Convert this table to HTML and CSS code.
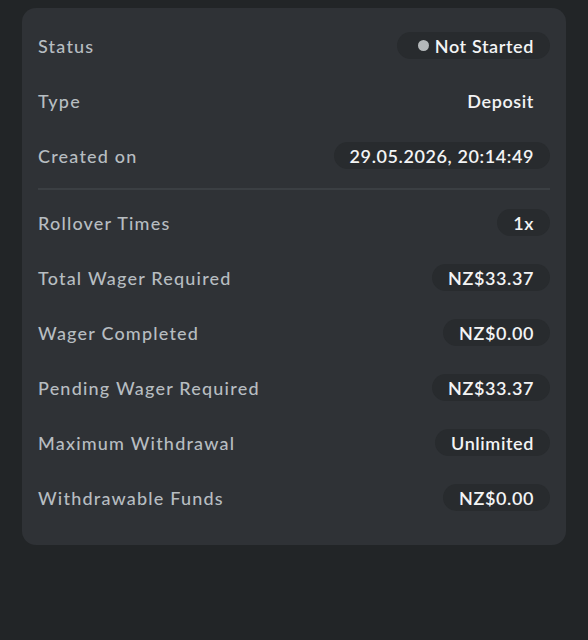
FILE: index.html
```html
<!DOCTYPE html>
<html lang="en">
<head>
<meta charset="utf-8">
<link rel="stylesheet" href="styles.css">
</head>
<body>
<div class="card">
  <div class="group">
    <div class="row"><span class="label">Status</span><span class="pill"><span class="dot"></span>Not Started</span></div>
    <div class="row"><span class="label">Type</span><span class="plain">Deposit</span></div>
    <div class="row"><span class="label">Created on</span><span class="pill">29.05.2026, 20:14:49</span></div>
  </div>
  <div class="divider"></div>
  <div class="group">
    <div class="row"><span class="label">Rollover Times</span><span class="pill">1x</span></div>
    <div class="row"><span class="label">Total Wager Required</span><span class="pill">NZ$33.37</span></div>
    <div class="row"><span class="label">Wager Completed</span><span class="pill">NZ$0.00</span></div>
    <div class="row"><span class="label">Pending Wager Required</span><span class="pill">NZ$33.37</span></div>
    <div class="row"><span class="label">Maximum Withdrawal</span><span class="pill">Unlimited</span></div>
    <div class="row"><span class="label">Withdrawable Funds</span><span class="pill">NZ$0.00</span></div>
  </div>
</div>
</body>
</html>
```
FILE: styles.css
```css
html, body {
  margin: 0;
  background: #222527;
}
body {
  padding: 8px 22px;
  font-family: Lato, "Open Sans", sans-serif;
  font-size: 18px;
}
.card {
  background: #2f3236;
  border-radius: 14px;
  padding: 10px 16px 20px;
}
.group {
  display: flex;
  flex-direction: column;
}
.row {
  height: 55px;
  display: flex;
  align-items: center;
  justify-content: space-between;
}
.label {
  color: #b7bdc1;
  font-weight: 500;
  letter-spacing: 1.2px;
}
.pill, .plain {
  color: #f3f4f5;
  font-weight: 600;
  letter-spacing: 0.6px;
}
.pill {
  display: flex;
  align-items: center;
  height: 27px;
  padding: 0 16px 0 16px;
  background: #282b2e;
  border-radius: 14px;
}
.plain {
  padding-right: 16px;
}
.dot {
  width: 11px;
  height: 11px;
  border-radius: 50%;
  background: #b5b9bb;
  margin: 0 6px 0 5px;
}
.divider {
  height: 2px;
  background: #3b3f43;
  margin: 5px 0;
}
```
